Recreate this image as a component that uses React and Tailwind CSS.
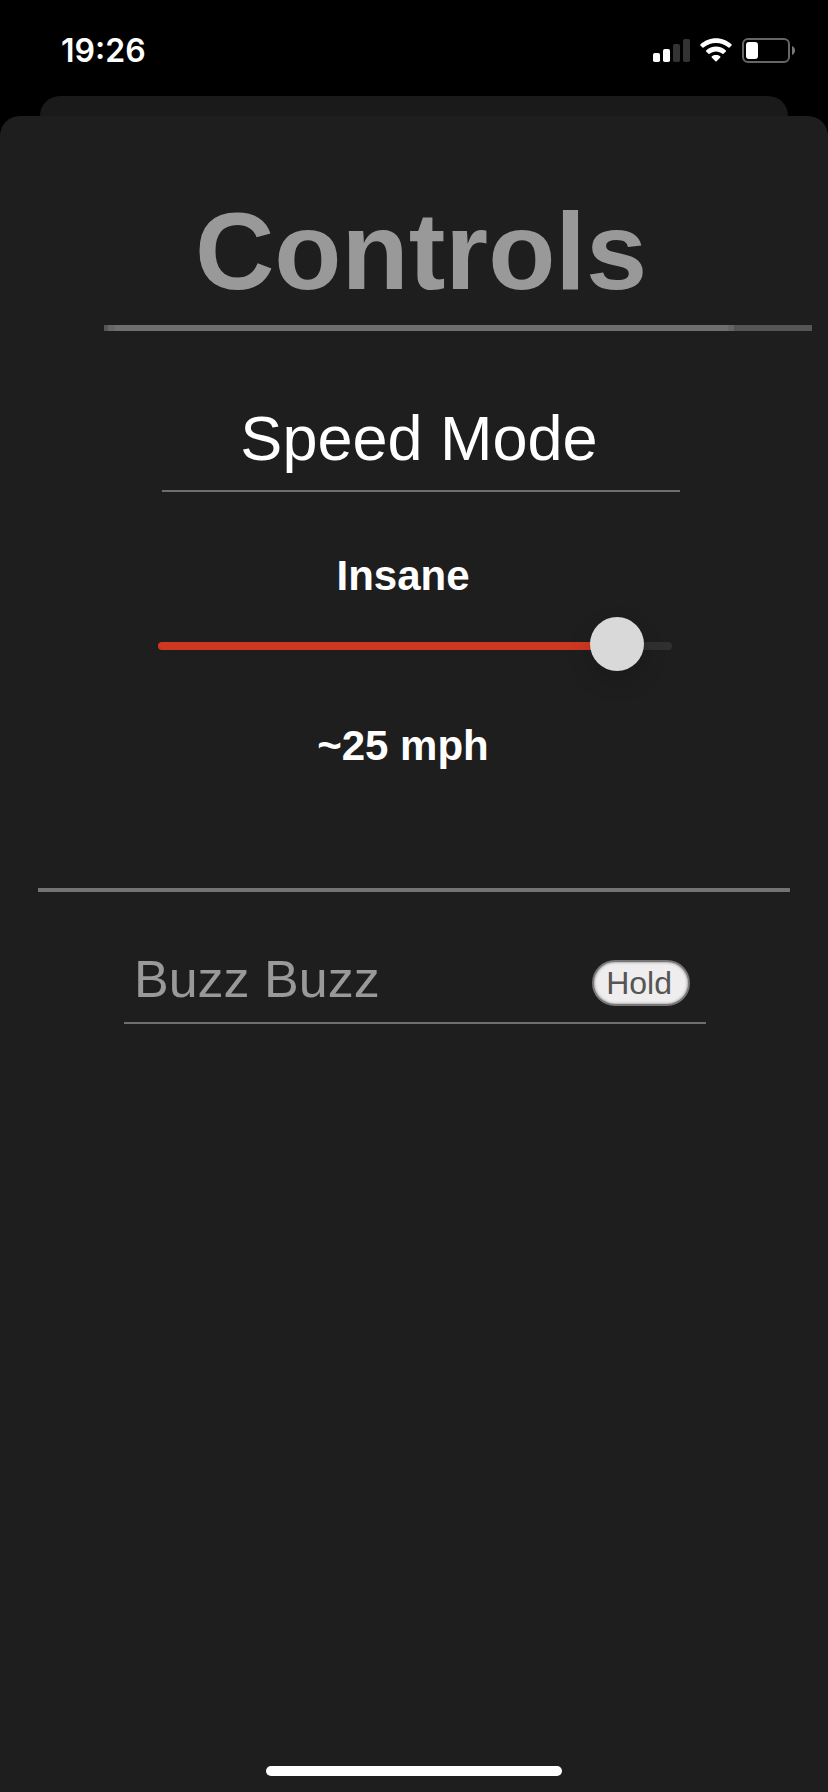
import { useState } from "react";

const MODES = ["Slow", "Cruise", "Fast", "Insane"];

function SignalIcon() {
  return (
    <svg width="37" height="23" viewBox="0 0 37 23" aria-hidden="true">
      <rect x="0" y="14" width="7" height="9" rx="1.8" fill="#fff" />
      <rect x="10" y="10" width="7" height="13" rx="1.8" fill="#fff" />
      <rect x="20" y="5" width="7" height="18" rx="1.8" fill="#333" />
      <rect x="30" y="0" width="7" height="23" rx="1.8" fill="#333" />
    </svg>
  );
}

function WifiIcon() {
  return (
    <svg width="32" height="24" viewBox="0 0 32 24" aria-hidden="true" fill="#fff">
      <path d="M16 0.2C9.9 0.2 4.4 2.6 0.4 6.4c-.3.3-.3.7 0 1l2.1 2.2c.3.3.7.3 1 0C6.8 6.5 11.2 4.9 16 4.9s9.2 1.6 12.5 4.7c.3.3.7.3 1 0l2.1-2.2c.3-.3.3-.7 0-1C27.6 2.6 22.1.2 16 .2Z" />
      <path d="M16 8.6c-3.8 0-7.2 1.4-9.9 3.8-.3.3-.3.7 0 1l2.4 2.4c.3.3.7.3 1 0 1.8-1.5 4-2.4 6.5-2.4s4.7.9 6.5 2.4c.3.3.7.3 1 0l2.4-2.4c.3-.3.3-.7 0-1C23.2 10 19.800 8.600 16 8.600Z" />
      <path d="M16 17c-1.600 0-3.100.5-4.300 1.400-.3.3-.3.700 0 1l3.700 3.800c.3.4.9.4 1.200 0l3.700-3.800c.3-.3.300-.7 0-1C19.100 17.500 17.600 17 16 17Z" />
    </svg>
  );
}

function BatteryIcon() {
  return (
    <svg width="53" height="25" viewBox="0 0 53 25" aria-hidden="true">
      <rect x="1" y="1" width="46" height="23" rx="5" fill="none" stroke="#666" strokeWidth="2" />
      <path d="M50 8v9c1.900-.8 3-2.500 3-4.500s-1.100-3.700-3-4.500Z" fill="#777" />
      <rect x="4" y="4" width="12" height="17" rx="3" fill="#fff" />
    </svg>
  );
}

function StatusBar() {
  return (
    <header className="flex h-24 items-center justify-between pt-1 pr-[33px] pl-[61px]">
      <time className="pt-px font-[Inter,sans-serif] text-[32px] leading-10 font-semibold text-white">19:26</time>
      <div className="flex items-center gap-[10px]">
        <SignalIcon />
        <WifiIcon />
        <BatteryIcon />
      </div>
    </header>
  );
}

function SpeedSlider() {
  const [speed, setSpeed] = useState(94);
  const mode = MODES[Math.min(3, Math.floor(speed / 25))];
  return (
    <section className="mt-[60px] pr-[156px] pl-[158px]">
      <label htmlFor="speed" className="block pr-6 text-center text-[42px] leading-12 font-bold text-white">
        {mode}
      </label>
      <input
        id="speed"
        type="range"
        min="0"
        max="100"
        value={speed}
        onChange={(e) => setSpeed(Number(e.target.value))}
        style={{ "--fill": `${speed}%` }}
        className="mt-[19px] block h-[54px] w-full appearance-none bg-transparent [&::-webkit-slider-runnable-track]:h-2 [&::-webkit-slider-runnable-track]:rounded-full [&::-webkit-slider-runnable-track]:bg-[linear-gradient(to_right,#cf3720_calc(var(--fill)-24px),#303031_calc(var(--fill)-24px))] [&::-webkit-slider-thumb]:mt-[-25px] [&::-webkit-slider-thumb]:size-[54px] [&::-webkit-slider-thumb]:appearance-none [&::-webkit-slider-thumb]:rounded-full [&::-webkit-slider-thumb]:bg-[#d9d9d9] [&::-webkit-slider-thumb]:shadow-[0_10px_24px_rgba(0,0,0,0.16)]"
      />
      <output htmlFor="speed" className="mt-[49px] block pr-6 text-center text-[42px] leading-12 font-bold text-white">
        ~{Math.round(speed * 0.27)} mph
      </output>
    </section>
  );
}

export default function App() {
  return (
    <div className="flex min-h-screen flex-col bg-black font-['Liberation_Sans',Arial,sans-serif]">
      <StatusBar />
      <div className="mx-10 h-5 rounded-t-[20px] bg-[#1a1a1a]" />
      <main className="flex grow flex-col rounded-t-[20px] bg-[#1e1e1e]">
        <div className="pt-[75px]">
          <h1 className="pl-[14px] text-center text-[110px] leading-[120px] font-bold text-[#999]">Controls</h1>
          <div className="mt-[14px] mr-4 ml-[104px] flex h-[6px] bg-[#6e6e6e]">
            <div className="w-1 bg-[#555]" />
            <div className="w-[6px] bg-[#666]" />
            <div className="grow" />
            <div className="w-[6px] bg-[#666]" />
            <div className="w-[78px] bg-[#555]" />
          </div>
        </div>

        <h2 className="mt-[71px] mr-[148px] ml-[162px] border-b-2 border-[#6e6e6e] pr-1 pb-4 text-center text-[63px] leading-[72px] text-white">
          Speed Mode
        </h2>

        <SpeedSlider />

        <hr className="mx-[38px] mt-[118px] border-t-4 border-[#737373]" />

        <section className="mt-[57px] mr-[122px] ml-[124px] flex items-center justify-between border-b-2 border-[#6e6e6e] pr-4 pb-[13px] pl-[10px]">
          <h3 className="text-[52px] leading-[60px] text-[#999]">Buzz Buzz</h3>
          <button
            type="button"
            className="mt-2 flex h-[46px] items-center rounded-full border-2 border-[#777] bg-[#efeded] pr-4 pl-3 text-[32px] leading-9 text-[#555] shadow-[inset_0_0_3px_#777]"
          >
            Hold
          </button>
        </section>

        <footer className="mt-auto flex justify-center pb-4">
          <div className="h-[10px] w-[296px] rounded-full bg-white" />
        </footer>
      </main>
    </div>
  );
}
